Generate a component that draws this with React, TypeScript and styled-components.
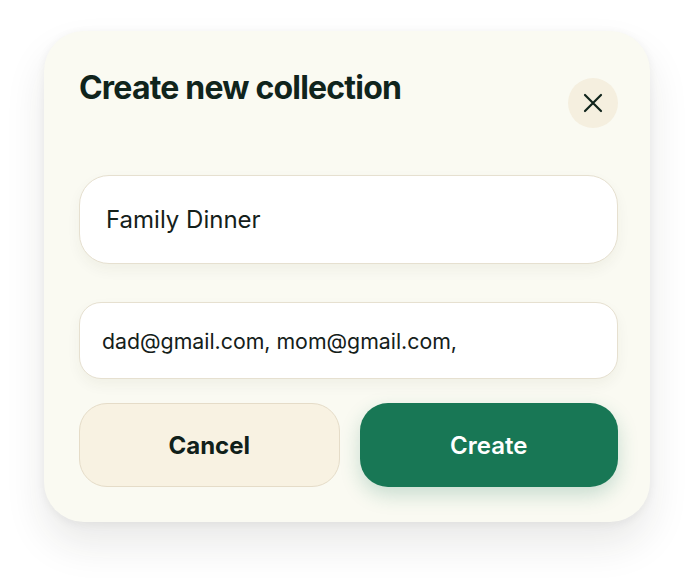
import React from "react";
import styled, { createGlobalStyle } from "styled-components";

const Global = createGlobalStyle`
  html, body { margin: 0; padding: 0; background: #ffffff; }
  body { font-family: Inter, "Noto Sans", sans-serif; }
  * { box-sizing: border-box; }
`;

const Page = styled.div`
  width: 695px;
  height: 578px;
  padding: 31px 0 0 44px;
  background: #ffffff;
`;

const Card = styled.div`
  width: 606px;
  height: 491px;
  background: #fafaf2;
  border-radius: 40px;
  padding: 38px 32px 35px 35px;
  display: flex;
  flex-direction: column;
  box-shadow: 0 22px 40px rgba(40, 40, 30, 0.10), 0 2px 10px rgba(40, 40, 30, 0.06);
`;

const Header = styled.div`
  display: flex;
  justify-content: space-between;
  align-items: flex-start;
`;

const Title = styled.h1`
  margin: 0;
  font-family: Inter, sans-serif;
  font-weight: 700;
  font-size: 32px;
  line-height: 38px;
  letter-spacing: -0.8px;
  color: #10241c;
`;

const CloseButton = styled.button`
  width: 50px;
  height: 50px;
  margin-top: 9px;
  border: none;
  border-radius: 50%;
  background: #f5efdf;
  display: flex;
  align-items: center;
  justify-content: center;
  padding: 0;
  color: #10241c;
`;

const Field = styled.div<{ $h: number; $r: number; $pad: number; $size: number; $mt: number }>`
  margin-top: ${(p) => p.$mt}px;
  width: 539px;
  height: ${(p) => p.$h}px;
  border-radius: ${(p) => p.$r}px;
  background: #ffffff;
  border: 1.5px solid #e6e0d0;
  display: flex;
  align-items: center;
  padding-left: ${(p) => p.$pad}px;
  font-family: Inter, sans-serif;
  font-size: ${(p) => p.$size}px;
  color: #14201a;
  box-shadow: 0 6px 14px rgba(60, 50, 20, 0.05);
`;

const Actions = styled.div`
  margin-top: 24px;
  display: flex;
  gap: 20px;
  width: 539px;
`;

const ActionButton = styled.button<{ $primary?: boolean }>`
  flex: 1;
  height: 84px;
  border-radius: 28px;
  font-family: Inter, sans-serif;
  font-weight: ${(p) => (p.$primary ? 600 : 700)};
  font-size: 24px;
  display: flex;
  align-items: center;
  justify-content: center;
  padding: 0;
  ${(p) =>
    p.$primary
      ? `
    background: #187755;
    color: #ffffff;
    border: none;
    box-shadow: 0 8px 20px rgba(24, 119, 85, 0.22);
  `
      : `
    background: #f8f2e2;
    color: #10201a;
    border: 1.5px solid #e5dcc8;
  `}
`;

export default function App() {
  return (
    <>
      <Global />
      <Page>
        <Card>
          <Header>
            <Title>Create new collection</Title>
            <CloseButton aria-label="Close">
              <svg width="24" height="24" viewBox="0 0 24 24" fill="none" stroke="currentColor" strokeWidth="2.2" strokeLinecap="round">
                <path d="M4 4 L20 20 M20 4 L4 20" />
              </svg>
            </CloseButton>
          </Header>
          <Field $mt={47} $h={89} $r={30} $pad={26} $size={24}>Family Dinner</Field>
          <Field $mt={38} $h={77} $r={22} $pad={22} $size={21.3}>dad@gmail.com, mom@gmail.com,</Field>
          <Actions>
            <ActionButton>Cancel</ActionButton>
            <ActionButton $primary>Create</ActionButton>
          </Actions>
        </Card>
      </Page>
    </>
  );
}
